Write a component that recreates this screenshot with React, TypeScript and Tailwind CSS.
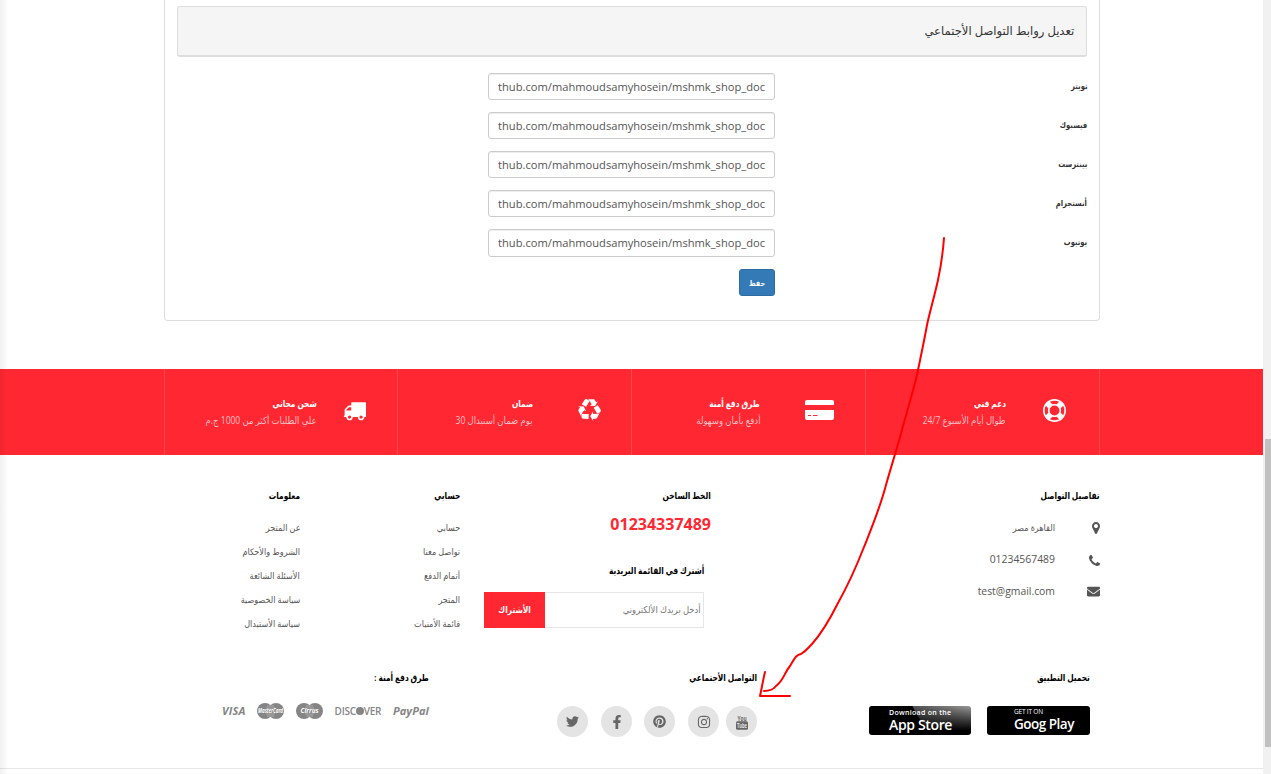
import React from "react";
import { FaEnvelope, FaTwitter, FaFacebookF, FaPinterest, FaInstagram } from "react-icons/fa";

const links = ["تويتر", "فيسبوك", "بينترست", "أنستجرام", "يوتيوب"];
const url = "https://github.com/mahmoudsamyhosein/mshmk_shop_doc";

const glyphs = {
  truck:
    "M640 1408q0-52-38-90t-90-38-90 38-38 90 38 90 90 38 90-38 38-90zm-384-512h384v-256h-158q-13 0-22 9l-195 195q-9 9-9 22v30zm1280 512q0-52-38-90t-90-38-90 38-38 90 38 90 90 38 90-38 38-90zm256-1088v1024q0 15-4 26.500t-13.500 18.500-16.500 11.500-23.500 6-22.500 2-25.500 0-22.500-.5q0 106-75 181t-181 75-181-75-75-181h-384q0 106-75 181t-181 75-181-75-75-181h-64q-3 0-22.500.5t-25.500 0-22.500-2-23.500-6-16.500-11.500-13.500-18.500-4-26.500q0-26 19-45t45-19v-320q0-8-.5-35t0-38 2.500-34.500 6.500-37 14-30.500 22.500-30l198-198q19-19 50.500-32t58.500-13h160v-192q0-26 19-45t45-19h1024q26 0 45 19t19 45z",
  ring:
    "M896 0q182 0 348 71t286 191 191 286 71 348-71 348-191 286-286 191-348 71-348-71-286-191-191-286-71-348 71-348 191-286 286-191 348-71zm0 128q-190 0-361 90l194 194q82-28 167-28t167 28l194-194q-171-90-361-90zm-678 1129l194-194q-28-82-28-167t28-167l-194-194q-90 171-90 361t90 361zm678 407q190 0 361-90l-194-194q-82 28-167 28t-167-28l-194 194q171 90 361 90zm0-384q159 0 271.500-112.500t112.500-271.500-112.500-271.500-271.500-112.500-271.500 112.500-112.500 271.500 112.500 271.500 271.500 112.500zm484-217l194 194q90-171 90-361t-90-361l-194 194q28 82 28 167t-28 167z",
  recycle:
    "M836 1169l-15 368-2 22-420-29q-36-3-67-31.500t-47-65.500q-11-27-14.500-55t4-65 12-55 21.500-64 19-53q78 12 509 28zm-387-586l180 379-147-92q-63 72-111.500 144.500t-72.500 125-39.500 94.500-18.500 63l-4 21-190-357q-17-26-18-56t6-47l8-18q35-63 114-188l-140-86zm1231 517l-188 359q-12 29-36.500 46.500t-43.500 20.500l-18 4q-71 7-219 12l8 164-230-367 211-362 7 173q170 16 283 5t170-33zm-785-924q-47 63-265 435l-317-187-19-12 225-356q20-31 60-45t80-10q24 2 48.500 12t42 21 41.500 33 36 34.500 36 39.500 32 35zm655 307l212 363q18 37 12.500 76t-27.500 74q-13 20-33 37t-38 28-48.500 22-47 16-51.500 14-46 12q-34-72-265-436l313-195zm-143-226l142-83-220 373-419-20 151-86q-34-89-75-166t-75.500-123.500-64.500-80-47-46.500l-17-13 405 1q31-3 58 10.500t39 28.500l11 15q39 61 112 190z",
  marker:
    "M1152 640q0-106-75-181t-181-75-181 75-75 181 75 181 181 75 181-75 75-181zm256 0q0 109-33 179l-364 774q-16 33-47.500 52t-67.500 19-67.500-19-46.500-52l-365-774q-33-70-33-179 0-212 150-362t362-150 362 150 150 362z",
  phone:
    "M1600 1240q0 27-10 70.500t-21 68.500q-21 50-122 106-94 51-186 51-27 0-53-3.500t-57.500-12.500-47-14.500-55.500-20.500-49-18q-98-35-175-83-127-79-264-216t-216-264q-48-77-83-175-3-9-18-49t-20.500-55.500-14.500-47-12.500-57.500-3.500-53q0-92 51-186 56-101 106-122 25-11 68.500-21t70.500-10q14 0 21 3 18 6 53 76 11 19 30 54t35 63.500 31 53.500q3 4 17.500 25t21.500 35.500 7 28.500q0 20-28.500 50t-62 55-62 53-28.500 46q0 9 5 22.500t8.500 20.500 14 24 11.500 19q76 137 174 235t235 174q2 1 19 11.500t24 14 20.500 8.500 22.500 5q18 0 46-28.500t53-62 55-62 50-28.500q14 0 28.500 7t35.500 21.500 25 17.500q25 15 53.500 31t63.500 35 54 30q70 35 76 53 3 7 3 21z",
};

function Glyph({ name, box = "0 0 1792 1792", className }: { name: keyof typeof glyphs; box?: string; className: string }) {
  return (
    <svg viewBox={box} className={className} fill="currentColor">
      <path d={glyphs[name]} />
    </svg>
  );
}

function Card() {
  return (
    <svg viewBox="0 0 29 20" className="h-[20px] w-[29px]" fill="currentColor">
      <path fillRule="evenodd" d="M0 5V2Q0 0 2 0H27Q29 0 29 2V5ZM0 10H29V18Q29 20 27 20H2Q0 20 0 18ZM3 15V16H6V15ZM8 15V16H12.500V15Z" />
    </svg>
  );
}

const services = [
  { icon: <Glyph name="ring" className="size-[23px]" />, title: "دعم فني", text: "طوال أيام الأسبوع 24/7", pad: "w-[234px] pr-[33px]", gap: "gap-[37px]" },
  { icon: <Card />, title: "طرق دفع أمنة", text: "أدفع بأمان وسهولة", pad: "w-[234px] pr-[31px]", gap: "gap-[45px]" },
  { icon: <Glyph name="recycle" className="size-[23px]" />, title: "ضمان", text: "يوم ضمان أستبدال 30", pad: "w-[234px] pr-[30px]", gap: "gap-[45px]" },
  { icon: <Glyph name="truck" box="0 128 1792 1536" className="h-[21px] w-[23px]" />, title: "شحن مجاني", text: "علي الطلبات أكثر من 1000 ج.م", pad: "w-[233px] pr-[31px]", gap: "gap-[26px]" },
];

function Heading({ children }: { children: React.ReactNode }) {
  return (
    <h4 className="h-4 text-[9.500px] leading-4 font-bold whitespace-nowrap text-black">
      <span className="inline-block origin-right scale-x-[0.78]">{children}</span>
    </h4>
  );
}

function LinkColumn({ title, items }: { title: string; items: string[] }) {
  return (
    <div className="w-[160px] shrink-0">
      <Heading>{title}</Heading>
      <ul className="mt-3">
        {items.map((t) => (
          <li key={t} className="h-6 text-[9px] leading-6 whitespace-nowrap text-[#555]">
            <span className="inline-block origin-right scale-x-[0.9]">{t}</span>
          </li>
        ))}
      </ul>
    </div>
  );
}

function Youtube() {
  return (
    <svg viewBox="0 0 14 16" className="h-4 w-[14px]" fill="#666">
      <text x="7" y="6.500" fontSize="7.500" textAnchor="middle" textLength="9" lengthAdjust="spacingAndGlyphs" fontWeight="bold">You</text>
      <rect x="1" y="7.300" width="12" height="8.400" rx="1.500" />
      <text x="7" y="14" fontSize="7" fill="#e4e4e4" textAnchor="middle" textLength="10" lengthAdjust="spacingAndGlyphs" fontWeight="bold">Tube</text>
    </svg>
  );
}

function Circles({ name }: { name: string }) {
  return (
    <svg viewBox="0 0 27 16" className="h-4 w-[27px]">
      <circle cx="8" cy="8" r="8" fill="#858585" />
      <circle cx="19" cy="8" r="8" fill="#858585" />
      <path d="M10 3h7M9 5h9M9 11h9M10 13h7" stroke="#bbb" strokeWidth=".7" />
      <text x="13.500" y="10.300" fontSize="6.500" textAnchor="middle" fill="white" fontWeight="bold" fontStyle="italic" textLength={name.length > 7 ? 25 : 18} lengthAdjust="spacingAndGlyphs">{name}</text>
    </svg>
  );
}

function Social({ children, className = "" }: { children: React.ReactNode; className?: string }) {
  return <a className={`flex size-[31px] shrink-0 items-center justify-center rounded-full bg-[#e4e4e4] text-[#666] ${className}`}>{children}</a>;
}

export default function App() {
  return (
    <div dir="rtl" className="relative h-[774px] w-[1271px] overflow-hidden bg-white font-['Open_Sans','DejaVu_Sans',sans-serif] text-[#333]">
      <div dir="ltr" className="flex h-full">
        <div dir="rtl" className="w-[1263px]">
          <section className="mr-[163px] h-[321px] w-[936px] rounded-b-[4px] border border-t-0 border-[#ddd] px-3 pt-[6px]">
            <div className="flex h-[51px] items-center rounded-[3px] border border-b-2 border-[#ddd] bg-[#f5f5f5] px-3 text-[12px]">
              <h3 className="origin-right scale-x-[0.965] whitespace-nowrap">تعديل روابط التواصل الأجتماعي</h3>
            </div>
            <div className="mt-4 flex flex-col gap-3">
              {links.map((l) => (
                <div key={l} className="flex h-[27px] last:h-7">
                  <label className="w-[312px] text-[8.500px] leading-[26px] font-bold">
                    <span className="inline-block origin-right scale-x-[0.8]">{l}</span>
                  </label>
                  <div dir="ltr" className="flex w-[287px] justify-end rounded-[3px] border border-[#ccc] px-[9px] shadow-[inset_0_1px_1px_rgba(0,0,0,0.075)]">
                    <div className="flex w-full justify-end overflow-hidden text-[11.150px] leading-[26px] text-[#555]">
                      <span className="whitespace-nowrap">{url}</span>
                    </div>
                  </div>
                </div>
              ))}
            </div>
            <button className="mt-3 mr-[312px] block h-[27px] w-9 rounded-[3px] border border-[#2e6da4] bg-[#337ab7] text-[8px] leading-[24px] font-bold text-white">
              <span className="inline-block scale-x-[0.8]">حفظ</span>
            </button>
          </section>

          <section className="mt-12 flex h-[86px] bg-[#ff2832] pr-[163px] text-white">
            <div className="flex border-r border-[#ff484f]">
              {services.map((s) => (
                <div key={s.title} className={`flex border-l border-[#ff484f] pt-[26px] ${s.pad} ${s.gap}`}>
                  <div className="flex h-[30px] shrink-0 items-center">{s.icon}</div>
                  <div className="whitespace-nowrap">
                    <h4 className="h-[17px] text-[9.500px] leading-[17px] font-bold">
                      <span className="inline-block origin-right scale-x-[0.78]">{s.title}</span>
                    </h4>
                    <p className="h-[17px] text-[10px] leading-[17px] text-[#ffbfc1]">
                      <span className="inline-block origin-right scale-x-[0.85]">{s.text}</span>
                    </p>
                  </div>
                </div>
              ))}
            </div>
          </section>

          <footer className="h-[314px] border-b border-[#e6e6e6] pt-[33px]">
            <div className="flex h-[182px] pr-[163px]">
              <div className="w-[389px] shrink-0">
                <Heading>تفاصيل التواصل</Heading>
                <ul className="mt-2 text-[10.400px] text-[#555]">
                  <li className="flex h-8 items-center">
                    <span className="w-[45px]"><Glyph name="marker" box="384 128 1024 1536" className="h-3 w-2" /></span>
                    <span className="origin-right scale-x-[0.9] text-[9px]">القاهرة مصر</span>
                  </li>
                  <li className="flex h-8 items-center">
                    <span className="w-[45px]"><Glyph name="phone" box="192 128 1408 1408" className="size-[11px]" /></span>
                    01234567489
                  </li>
                  <li className="flex h-[31px] items-center">
                    <span className="w-[45px]"><FaEnvelope className="size-[13px]" /></span>
                    test@gmail.com
                  </li>
                </ul>
              </div>
              <div className="w-[251px] shrink-0">
                <Heading>الخط الساخن</Heading>
                <p className="mt-2 h-6 text-[16px] leading-6 font-bold text-[#ff2832]">01234337489</p>
                <div className="mt-[27px] pr-[7px]">
                  <Heading>أشترك في القائمة البريدية</Heading>
                  <div className="mt-[13px] flex h-9 w-[220px]">
                    <div className="flex w-[159px] items-center border border-l-0 border-[#e6e6e6] px-[2px] text-[9.500px] whitespace-nowrap text-[#777]">
                      <span className="origin-right scale-x-[0.89]">أدخل بريدك الألكتروني</span>
                    </div>
                    <button className="w-[61px] bg-[#ff2832] text-[9px] font-bold text-white">
                      <span className="inline-block scale-x-[0.83]">الأشتراك</span>
                    </button>
                  </div>
                </div>
              </div>
              <LinkColumn title="حسابي" items={["حسابي", "تواصل معنا", "أتمام الدفع", "المتجر", "قائمة الأمنيات"]} />
              <LinkColumn title="معلومات" items={["عن المتجر", "الشروط والأحكام", "الأسئلة الشائعة", "سياسة الخصوصية", "سياسة الأستبدال"]} />
            </div>

            <div className="flex pr-[173px]">
              <div className="w-[333px]">
                <Heading>تحميل التطبيق</Heading>
                <div dir="ltr" className="mt-5 ml-[112px] flex gap-4">
                  <div className="h-[29px] w-[102px] rounded-[3px] bg-[linear-gradient(to_bottom,transparent,#000_85%),linear-gradient(60deg,#000_50%,#555_51%,#999)] pt-[3px] pl-5 text-white">
                    <div className="text-[7px] leading-[8px] font-semibold tracking-[0.3px] whitespace-nowrap">Download on the</div>
                    <div className="text-[14px] leading-[16px] font-semibold tracking-[-0.35px] whitespace-nowrap">App Store</div>
                  </div>
                  <div className="h-[29px] w-[103px] rounded-[3px] bg-black pt-[2px] pl-[27px] text-white">
                    <div className="text-[6.500px] leading-[8px] tracking-[-0.2px] whitespace-nowrap">GET IT ON</div>
                    <div className="text-[13.500px] leading-[16px] font-semibold tracking-[-0.5px] whitespace-nowrap">Goog Play</div>
                  </div>
                </div>
              </div>
              <div className="w-[328px]">
                <Heading>التواصل الأجتماعي</Heading>
                <div className="mt-5 flex">
                  <Social><Youtube /></Social>
                  <Social className="mr-[7px]"><FaInstagram className="size-[14px]" /></Social>
                  <Social className="mr-[13px]"><FaPinterest className="size-[13px]" /></Social>
                  <Social className="mr-3"><FaFacebookF className="size-[14px]" /></Social>
                  <Social className="mr-[13px]"><FaTwitter className="size-[13px]" /></Social>
                </div>
              </div>
              <div>
                <Heading>طرق دفع أمنة :</Heading>
                <div dir="ltr" className="mt-[17px] flex h-4 w-[207px] items-center justify-between text-[#858585]">
                  <span className="text-[11px] font-bold tracking-[0.2px] italic">VISA</span>
                  <Circles name="MasterCard" />
                  <Circles name="Cirrus" />
                  <span className="flex items-center text-[10px] font-semibold tracking-[-0.25px]">DISC<i className="size-2 rounded-full bg-[#858585]" />VER</span>
                  <span className="text-[11px] font-bold tracking-[0.1px] italic">PayPal</span>
                </div>
              </div>
            </div>
          </footer>
        </div>
        <div className="h-full w-2 bg-[#f1f1f1] pt-[439px] pl-[2px]"><div className="h-[308px] bg-[#c1c1c1]" /></div>
      </div>
      <div className="absolute inset-y-0 left-0 w-2 bg-gradient-to-r from-black/6 to-transparent" />
      <svg className="pointer-events-none absolute inset-0 size-full" viewBox="0 0 1271 774" fill="none" stroke="#ff0000" strokeWidth="2" strokeLinecap="round" strokeLinejoin="round">
        <path d="M944 238C943 251 941 266 938 280C934 298 930 311 927 325C924 342 920 360 917 375C911 399 906 415 902 430C896 452 891 467 886 485C880 508 872 527 864 547C855 570 847 587 838 603C828 623 821 634 812 644C808 648 806 651 801 654C796 655 795 658 790 666C784 673 784 680 776 686C773 690 768 691 764 691" />
        <path d="M765 672C763 680 762 687 760 696H790" />
      </svg>
    </div>
  );
}
